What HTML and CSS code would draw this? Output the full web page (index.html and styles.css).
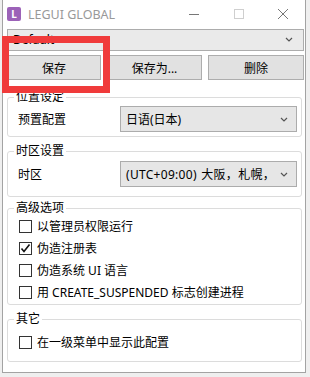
FILE: index.html
```html
<!DOCTYPE html>
<html>
	<head>
		<meta charset="UTF-8">
		<title>LEGUI GLOBAL</title>
		<link rel="stylesheet" href="styles.css">
	</head>
	<body>

		<div class="window">

			<!--标题栏-->
			<div class="titlebar">
				<span class="app-icon">L</span>
				<span class="title">LEGUI GLOBAL</span>
				<div class="caption">
					<span class="cap-min"><svg width="10" height="10" viewBox="0 0 10 10"><line x1="0" y1="5.5" x2="10" y2="5.5" stroke="#777" stroke-width="1"/></svg></span>
					<span class="cap-max"><svg width="10" height="10" viewBox="0 0 10 10"><rect x="0.5" y="0.5" width="9" height="9" fill="none" stroke="#cfcfcf" stroke-width="1"/></svg></span>
					<span class="cap-close"><svg width="10" height="10" viewBox="0 0 10 10"><path d="M0 0L10 10M10 0L0 10" stroke="#777" stroke-width="1"/></svg></span>
				</div>
			</div>

			<div class="content">
				<!--配置选择-->
				<div class="combo combo-top">
					<span class="combo-text">Default</span>
					<svg class="chev" width="8" height="5" viewBox="0 0 8 5"><polyline points="1,1 4,4 7,1" fill="none" stroke="#555" stroke-width="1.2"/></svg>
				</div>

				<div class="btn-row">
					<button class="btn b1">保存</button>
					<button class="btn b2">保存为...</button>
					<button class="btn b3">删除</button>
				</div>

				<fieldset class="group g-location">
					<legend>位置设定</legend>
					<div class="field">
						<span class="label">预置配置</span>
						<div class="combo">
							<span class="combo-text">日语(日本)</span>
							<svg class="chev" width="8" height="5" viewBox="0 0 8 5"><polyline points="1,1 4,4 7,1" fill="none" stroke="#555" stroke-width="1.2"/></svg>
						</div>
					</div>
				</fieldset>

				<fieldset class="group g-timezone">
					<legend>时区设置</legend>
					<div class="field">
						<span class="label">时区</span>
						<div class="combo">
							<span class="combo-text tz">(UTC+09:00) 大阪，札幌，</span>
							<svg class="chev" width="8" height="5" viewBox="0 0 8 5"><polyline points="1,1 4,4 7,1" fill="none" stroke="#555" stroke-width="1.2"/></svg>
						</div>
					</div>
				</fieldset>

				<fieldset class="group g-advanced">
					<legend>高级选项</legend>
					<label class="check"><span class="box"></span>以管理员权限运行</label>
					<label class="check"><span class="box"><svg width="11" height="11" viewBox="0 0 11 11"><polyline points="1.5,5.5 4,8.5 9.5,1.5" fill="none" stroke="#111" stroke-width="1.6"/></svg></span>伪造注册表</label>
					<label class="check"><span class="box"></span>伪造系统 UI 语言</label>
					<label class="check"><span class="box"></span>用 CREATE_SUSPENDED 标志创建进程</label>
				</fieldset>

				<fieldset class="group g-other">
					<legend>其它</legend>
					<label class="check"><span class="box"></span>在一级菜单中显示此配置</label>
				</fieldset>
			</div>
		</div>

		<!--红框标注-->
		<div class="highlight"></div>

	</body>
</html>
```

FILE: styles.css
```css
*{
	box-sizing: border-box;
}

body{
	margin:0;
	height:377px;
	overflow: hidden;
	position: relative;
	background: #efefef;
	font-family: "Noto Sans", "Noto Sans CJK SC", sans-serif;
	font-size:12px;
	color:#000;
}

.window{
	width:304px;
	height:373px;
	margin-left:2px;
	background: #fff;
	border:1px solid #a3a3a3;
	border-top:0;
}

.titlebar{
	height:28px;
	display: flex;
	align-items: center;
}
.app-icon{
	width:14px;
	height:14px;
	margin-left:4px;
	border-radius:2px;
	background: #9c62b8;
	color:#fff;
	font-size:10px;
	font-weight: bold;
	display: flex;
	align-items: center;
	justify-content: center;
}
.title{
	margin-left:7px;
	color:#999;
	font-size:12.5px;
}
.caption{
	margin-left: auto;
	display: flex;
}
.caption span{
	width:45px;
	height:28px;
	display: flex;
	align-items: center;
	justify-content: center;
}
.caption .cap-close{
	width:44px;
}

.content{
	padding:1px 1px 0 4px;
}

.combo{
	display: flex;
	align-items: center;
	background: #e6e6e6;
	border:1px solid #acacac;
	padding:0 8px 0 5px;
	overflow: hidden;
}
.combo-text{
	flex:1;
	white-space: nowrap;
}
.combo-text.tz{
	flex:none;
	word-spacing:1px;
	letter-spacing:0.3px;
}
.chev{
	margin-left: auto;
	flex:none;
}
.combo-top{
	height:22px;
	background: #eaeaea;
	padding-right:10px;
	padding-bottom:2px;
}

.btn-row{
	display: flex;
	gap:6px;
	margin-top:4px;
}
.btn{
	height:25px;
	padding:0;
	background: #e1e1e1;
	border:1px solid #adadad;
	font: inherit;
	color:#000;
}
.b1{ width:94px; }
.b2{ width:95px; }
.b3{ width:96px; }

.group{
	margin:10px 2px 0 0;
	border:1px solid #dcdcdc;
	border-radius:3px;
	padding:2px 4px 4px 10px;
	min-width:0;
}
.group legend{
	padding:0 2px;
	margin-left:-4px;
	line-height:14px;
	font-size:12px;
}
.g-timezone{
	margin-top:7px;
	padding-top:3px;
	padding-bottom:9px;
}
.g-advanced{
	margin-top:4px;
	padding-top:0;
	padding-bottom:1px;
}
.g-other{
	margin-top:7px;
	padding-top:5px;
	padding-bottom:8px;
}

.field{
	display: flex;
	align-items: center;
}
.field .label{
	width:102px;
	flex:none;
}
.field .combo{
	flex:1;
	height:26px;
}

.check{
	height:22px;
	display: flex;
	align-items: center;
	gap:5px;
	margin-left:1px;
	white-space: nowrap;
}
.check .box{
	width:13px;
	height:13px;
	flex:none;
	border:1px solid #333;
	background: #fff;
	display: flex;
	align-items: center;
	justify-content: center;
}

.highlight{
	position: absolute;
	left:2px;
	top:36px;
	width:108px;
	height:57px;
	border:7px solid #f03b3b;
}
```
